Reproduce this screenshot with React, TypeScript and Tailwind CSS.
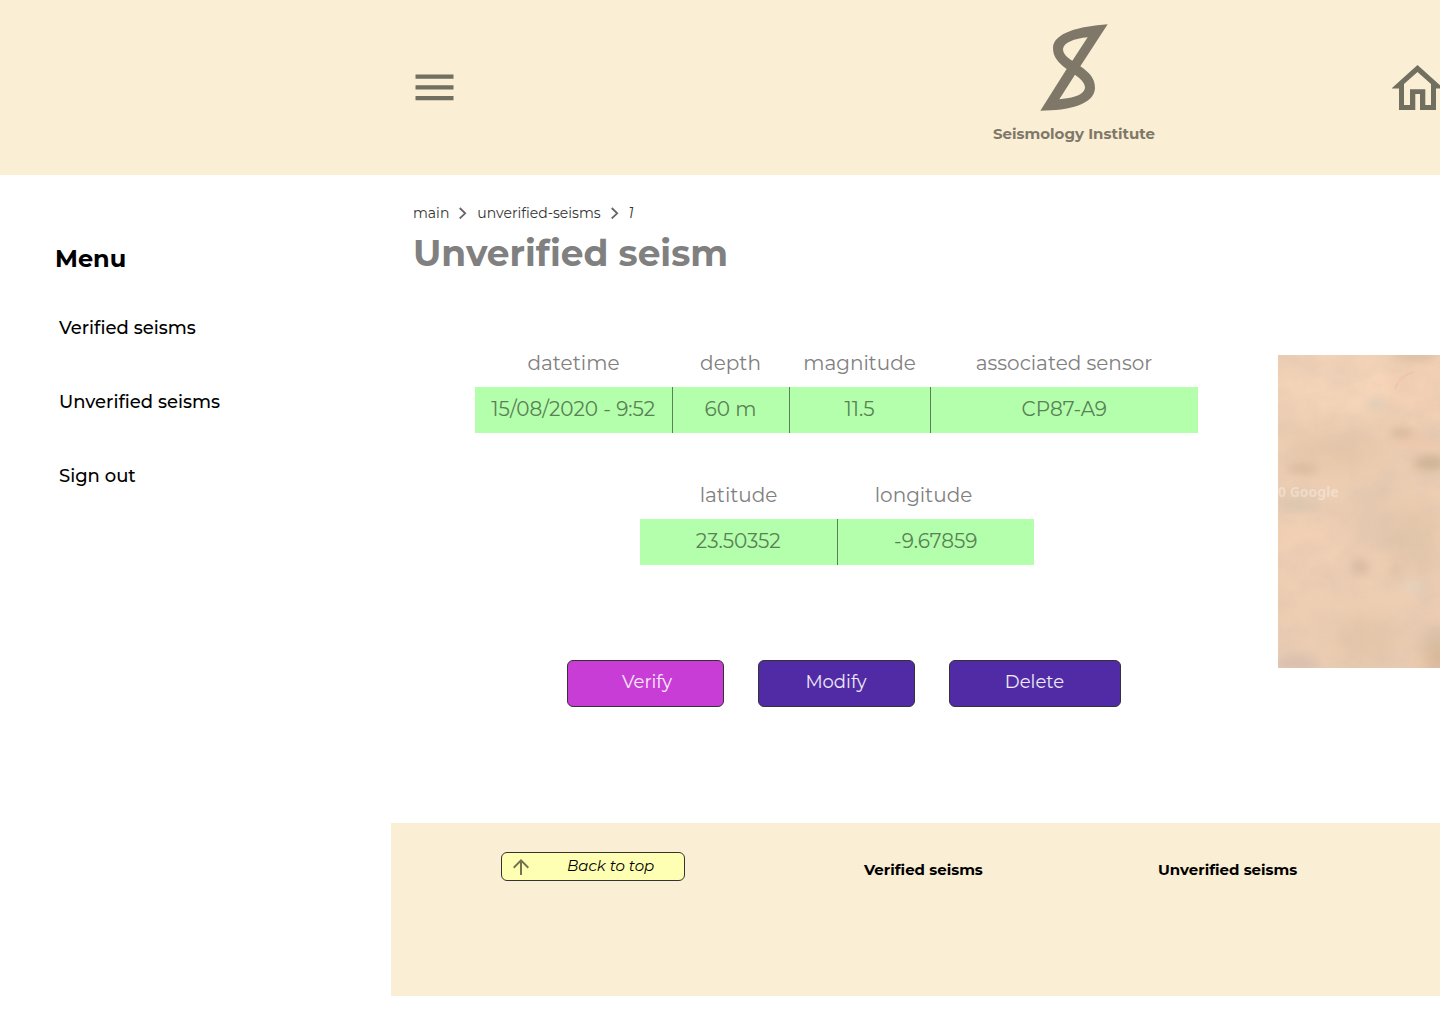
import React from "react";

type Column = { label: string; value: string; width: string; labelPad?: string };

const readings: Column[] = [
  { label: "datetime", value: "15/08/2020 - 9:52", width: "w-[197px]" },
  { label: "depth", value: "60 m", width: "w-[117px]" },
  { label: "magnitude", value: "11.5", width: "w-[141px]" },
  { label: "associated sensor", value: "CP87-A9", width: "w-[268px]" },
];

const position: Column[] = [
  { label: "latitude", value: "23.50352", width: "w-[198px]" },
  { label: "longitude", value: "-9.67859", width: "w-[196px]", labelPad: "pr-6" },
];

function DataTable({ columns, name }: { columns: Column[]; name: string }) {
  return (
    <table aria-label={name} className="table-fixed border-collapse text-center text-xl text-[#808080]">
      <thead>
        <tr className="h-12">
          {columns.map((c) => (
            <th key={c.label} scope="col" className={`${c.width} ${c.labelPad ?? "p-0"} align-top leading-12 font-normal whitespace-nowrap`}>
              {c.label}
            </th>
          ))}
        </tr>
      </thead>
      <tbody>
        <tr className="h-[46px] bg-[#b3ffab] text-[#5a8056]">
          {columns.map((c, i) => (
            <td key={c.label} className={`p-0 pb-0.5 whitespace-nowrap ${i > 0 ? "border-l border-[#5a8056]" : ""}`}>
              {c.value}
            </td>
          ))}
        </tr>
      </tbody>
    </table>
  );
}

function Logo() {
  return (
    <svg className="h-[87px] w-[68px]" viewBox="182 43 204 261" fill="#7f7868" fillRule="evenodd" aria-hidden="true">
      <path d="M385 44L303 170C330 189 347 206 347 235C345 284 270 303 183 303L262 178C240 161 221 145 221 115C222 70 300 50 385 44ZM325 83C285 87 253 99 251 118C251 132 262 143 279 153ZM287 195L240 269C290 265 317 252 317 233C316 218 302 206 287 195Z" />
    </svg>
  );
}

function Chevron() {
  return (
    <svg className="h-3 w-2" viewBox="0 0 8 12" fill="none" stroke="#666" strokeWidth="1.8" aria-hidden="true">
      <path d="M0.7 1L6.2 6.3L0.7 11.5" />
    </svg>
  );
}

function SatelliteMap() {
  return (
    <svg className="h-[313px] w-full" viewBox="0 0 162 313" preserveAspectRatio="xMinYMin slice" role="img" aria-label="Satellite map">
      <defs>
        <filter id="soft" x="-50%" y="-50%" width="200%" height="200%">
          <feGaussianBlur stdDeviation="11" />
        </filter>
        <filter id="fine" x="-50%" y="-50%" width="200%" height="200%">
          <feGaussianBlur stdDeviation="5" />
        </filter>
        <filter id="terrain" x="0" y="0" width="100%" height="100%">
          <feTurbulence type="fractalNoise" baseFrequency="0.025 0.03" numOctaves="5" seed="8" />
          <feColorMatrix values="0 0 0 0 0.62  0 0 0 0 0.5  0 0 0 0 0.4  1.1 0 0 0 -0.38" />
        </filter>
      </defs>
      <rect width="162" height="313" fill="#edceb3" />
      <g filter="url(#soft)">
        <ellipse cx="55" cy="28" rx="60" ry="32" fill="#f7d6ba" />
        <ellipse cx="140" cy="40" rx="26" ry="38" fill="#f5d1b5" />
        <ellipse cx="60" cy="98" rx="50" ry="18" fill="#e8c7aa" />
        <ellipse cx="100" cy="160" rx="40" ry="30" fill="#e8cbb0" />
        <ellipse cx="135" cy="185" rx="30" ry="35" fill="#e6c8ab" />
        <ellipse cx="35" cy="200" rx="38" ry="35" fill="#f2d0b5" />
        <ellipse cx="90" cy="285" rx="34" ry="25" fill="#e4c6aa" />
        <ellipse cx="162" cy="300" rx="14" ry="24" fill="#d3b290" />
      </g>
      <g filter="url(#fine)">
        <ellipse cx="98" cy="49" rx="9" ry="5" fill="#dcccb7" />
        <ellipse cx="124" cy="78" rx="13" ry="5" fill="#d6b89b" />
        <ellipse cx="152" cy="108" rx="17" ry="8" fill="#d0b497" />
        <ellipse cx="25" cy="114" rx="16" ry="3" fill="#d3b095" />
        <ellipse cx="22" cy="150" rx="18" ry="5" fill="#ddc9b0" />
        <ellipse cx="82" cy="212" rx="9" ry="9" fill="#d9bca2" />
        <ellipse cx="117" cy="217" rx="5" ry="4" fill="#d8ba9f" />
        <ellipse cx="136" cy="232" rx="10" ry="4" fill="#e4d6c3" />
        <ellipse cx="18" cy="308" rx="24" ry="8" fill="#dcc1b0" />
        <ellipse cx="140" cy="88" rx="20" ry="3" fill="#f8c6a8" />
        <ellipse cx="136" cy="1" rx="22" ry="4" fill="#dcbb9d" />
      </g>
      <path d="M117 34Q122 20 136 17" fill="none" stroke="#f7bf9f" strokeWidth="2" opacity="0.6" />
      <rect width="162" height="313" filter="url(#terrain)" opacity="0.6" />
      <text x="0" y="142" fill="#fff" opacity="0.32" fontSize="14" fontWeight="700" fontFamily="'Noto Sans', sans-serif">
        0 Google
      </text>
    </svg>
  );
}

const actions = [
  { label: "Verify", style: "w-[157px] bg-[#c83dd5] pl-1" },
  { label: "Modify", style: "w-[157px] bg-[#512ba5]" },
  { label: "Delete", style: "w-[172px] bg-[#512ba5]" },
];

export default function App() {
  return (
    <div className="min-h-screen overflow-hidden bg-white pb-7 font-['Montserrat','Inter',sans-serif] text-black [font-variant-ligatures:none]">
      <header className="flex h-[175px] items-center bg-[#faeed5] pl-[415px]">
        <button type="button" aria-label="Toggle menu" className="shrink-0">
          <svg className="h-[27px] w-[39px]" viewBox="0 0 39 27" fill="#706f60" aria-hidden="true">
            <path d="M0.5 0.5H38.5V4.8H0.5ZM0.5 11.3H38.5V15.6H0.5ZM0.5 22H38.5V26.3H0.5Z" />
          </svg>
        </button>
        <a href="#main" className="mr-[237px] ml-auto flex shrink-0 flex-col items-center gap-3 self-start pt-6">
          <Logo />
          <span className="text-[15px] leading-[22px] font-bold whitespace-nowrap text-[#7f7868]">Seismology Institute</span>
        </a>
        <a href="#home" aria-label="Home" className="shrink-0">
          <svg className="h-[45px] w-12" viewBox="0 0 48 45" fill="#706f60" fillRule="evenodd" aria-hidden="true">
            <path d="M25.5 0L51.5 23.5H44V45H28V29H23.3V45H7V23.5H-0.5ZM25.5 7L12 19V40H18V24.3H33.3V40H39V19Z" />
          </svg>
        </a>
      </header>

      <div className="flex">
        <aside className="w-[391px] shrink-0 pt-[66px] pl-[55px]">
          <h2 className="text-2xl leading-9 font-bold">Menu</h2>
          <nav aria-label="Menu" className="mt-[39px] flex flex-col items-start gap-[50px] pl-1 text-lg leading-6 font-medium">
            <a href="#verified">Verified seisms</a>
            <a href="#unverified">Unverified seisms</a>
            <a href="#signout">Sign out</a>
          </nav>
        </aside>

        <div className="min-w-0 flex-1">
          <main id="main">
            <div className="pt-7 pl-[22px]">
              <nav aria-label="Breadcrumb" className="flex items-center gap-2.5 text-sm leading-5 text-[#333]">
                <a href="#main">main</a>
                <Chevron />
                <a href="#unverified">unverified-seisms</a>
                <Chevron />
                <span className="italic">1</span>
              </nav>
              <h1 className="mt-1.5 text-4xl leading-12 font-bold text-[#808080]">Unverified seism</h1>
            </div>

            <div className="mt-[78px] flex">
              <div className="-mt-4 flex w-[887px] shrink-0 flex-col items-center gap-[38px] pl-1">
                <DataTable name="Seism readings" columns={readings} />
                <DataTable name="Seism position" columns={position} />
                <div className="mt-[57px] flex gap-[34px] pl-3.5">
                  {actions.map((a) => (
                    <button key={a.label} type="button" className={`${a.style} h-[47px] rounded-md border border-[#333] pb-1 text-lg text-white/90`}>
                      {a.label}
                    </button>
                  ))}
                </div>
              </div>
              <div className="min-w-0 flex-1">
                <SatelliteMap />
              </div>
            </div>
          </main>

          <footer className="mt-[116px] flex h-[173px] items-start bg-[#faeed5] pt-[29px] pl-[110px] text-[15px] font-bold">
            <button type="button" className="flex h-[29px] w-[184px] shrink-0 items-center rounded-md border border-[#333] bg-[#ffffb3] pl-[11px] text-[15px] font-normal italic">
              <svg className="h-4 w-4" viewBox="0 0 16 16" fill="none" stroke="#737350" strokeWidth="2" aria-hidden="true">
                <path d="M8 16V1.5M0.7 8.7L8 1.4L15.3 8.7" />
              </svg>
              <span className="ml-[38px]">Back to top</span>
            </button>
            <a href="#verified" className="mt-1.5 ml-[179px] w-[294px] shrink-0 leading-6">Verified seisms</a>
            <a href="#unverified" className="mt-1.5 leading-6 whitespace-nowrap">Unverified seisms</a>
          </footer>
        </div>
      </div>
    </div>
  );
}
